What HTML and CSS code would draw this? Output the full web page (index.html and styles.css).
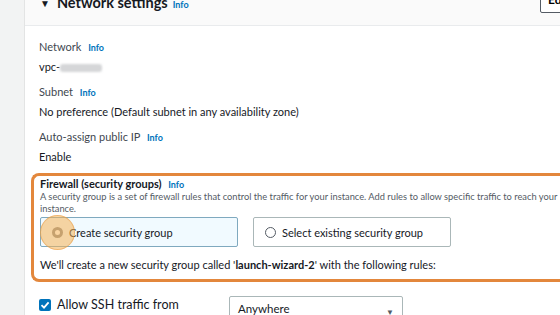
FILE: index.html
```html
<!DOCTYPE html>
<html lang="en">
<head>
  <meta charset="UTF-8" />
  <title>Network settings</title>
  <link rel="stylesheet" href="styles.css">
</head>
<body>
  <div class="side"></div>

  <div class="panel">
    <!-- Panel header -->
    <div class="panel-head">
      <span class="caret">&#9660;</span>
      <h2>Network settings</h2>
      <a class="info" href="#">Info</a>
      <button class="edit">Edit</button>
    </div>

    <div class="panel-body">
      <div class="field">
        <div class="label">Network <a class="info" href="#">Info</a></div>
        <div class="value">vpc-<span class="blur"></span></div>
      </div>
      <div class="field">
        <div class="label">Subnet <a class="info" href="#">Info</a></div>
        <div class="value">No preference (Default subnet in any availability zone)</div>
      </div>
      <div class="field">
        <div class="label">Auto-assign public IP <a class="info" href="#">Info</a></div>
        <div class="value">Enable</div>
      </div>

      <!-- Highlighted firewall block -->
      <div class="firewall">
        <div class="label strong">Firewall (security groups) <a class="info" href="#">Info</a></div>
        <p class="desc">A security group is a set of firewall rules that control the traffic for your instance. Add rules to allow specific traffic to reach your instance.</p>
        <div class="tiles">
          <label class="tile selected">
            <span class="radio"></span>
            <span class="click"></span>
            Create security group
          </label>
          <label class="tile">
            <span class="radio"></span>
            Select existing security group
          </label>
        </div>
        <p class="note">We'll create a new security group called '<b>launch-wizard-2</b>' with the following rules:</p>
      </div>

      <div class="rule">
        <div class="rule-left">
          <div class="check-row">
            <span class="checkbox">
              <svg viewBox="0 0 12 12" width="12" height="12"><path d="M2.5 6.2 L5 8.6 L9.6 3.4" fill="none" stroke="#fff" stroke-width="1.8"/></svg>
            </span>
            Allow SSH traffic from
          </div>
          <div class="hint">Helps you connect to your instance</div>
        </div>
        <div class="select">
          Anywhere
          <span class="arrow">&#9660;</span>
        </div>
      </div>
    </div>
  </div>
</body>
</html>
```

FILE: styles.css
```css
* {
  margin: 0;
  padding: 0;
  box-sizing: border-box;
}
body {
  font-family: Lato, 'Open Sans', sans-serif;
  color: #16191f;
  background: #f2f3f3;
  display: flex;
  height: 315px;
  overflow: hidden;
}
.side {
  width: 24px;
  flex-shrink: 0;
}
.panel {
  flex: 1;
  background: #fff;
  border-left: 1px solid #e3e4e4;
  margin-top: -14px;
}
.panel-head {
  display: flex;
  align-items: center;
  gap: 5px;
  height: 40px;
  padding: 0 0 6px 15px;
  background: #fafafa;
  border-bottom: 1px solid #e9ebed;
  position: relative;
}
.caret {
  font-size: 10px;
  color: #16191f;
  margin-right: 2px;
}
.panel-head h2 {
  font-size: 14.5px;
  font-weight: 700;
}
.info {
  font-size: 9px;
  font-weight: 700;
  color: #0073bb;
  text-decoration: none;
  margin-left: 4px;
}
.panel-head .info {
  margin: 3px 0 0 0;
}
.edit {
  position: absolute;
  right: -40px;
  top: 0;
  height: 27px;
  width: 60px;
  background: #fff;
  border: 1px solid #545b64;
  border-radius: 2px;
  font: 700 12px Lato, sans-serif;
  text-align: left;
  padding-left: 7px;
}
.panel-body {
  padding: 12px 0 0 14px;
}
.field {
  margin-bottom: 7px;
}
.label {
  font-size: 11px;
  color: #414750;
  line-height: 17px;
}
.label.strong {
  font-weight: 700;
  color: #16191f;
  line-height: 13px;
}
.value {
  font-size: 11px;
  line-height: 18px;
  margin-top: 2px;
}
.blur {
  display: inline-block;
  width: 42px;
  height: 8px;
  background: #d5d6d8;
  border-radius: 3px;
  vertical-align: middle;
  filter: blur(1px);
}
.firewall {
  margin: 5px -20px 0 -8px;
  padding: 1px 0 7px 6px;
  border: 3px solid #e3873c;
  border-right: none;
  border-radius: 8px 0 0 8px;
}
.desc {
  font-size: 9.3px;
  color: #545b64;
  line-height: 12px;
  padding-right: 16px;
}
.tiles {
  display: flex;
  gap: 15px;
  margin-top: 2px;
}
.tile {
  position: relative;
  display: flex;
  align-items: center;
  gap: 6px;
  width: 198px;
  height: 30px;
  padding-left: 11px;
  border: 1px solid #aab7b8;
  border-radius: 2px;
  font-size: 11px;
  background: #fff;
}
.tile.selected {
  background: #f1faff;
  border-color: #7fa9bf;
}
.radio {
  width: 11px;
  height: 11px;
  border: 1px solid #545b64;
  border-radius: 50%;
  background: #fff;
  flex-shrink: 0;
}
.tile.selected .radio {
  border: 3.5px solid #8c8c8c;
}
.click {
  position: absolute;
  left: -1px;
  top: -3px;
  width: 35px;
  height: 35px;
  border-radius: 50%;
  background: rgba(246, 178, 86, 0.55);
  border: 1px solid rgba(232, 150, 60, 0.5);
}
.note {
  font-size: 11px;
  line-height: 15px;
  margin-top: 10px;
}
.rule {
  display: flex;
  gap: 25px;
  margin-top: 14px;
}
.rule-left {
  width: 165px;
}
.check-row {
  display: flex;
  align-items: center;
  gap: 6px;
  font-size: 12.5px;
  line-height: 17px;
}
.checkbox {
  width: 12px;
  height: 12px;
  background: #0073bb;
  border-radius: 2px;
  display: flex;
}
.hint {
  font-size: 10px;
  color: #687078;
  margin-left: 18px;
}
.select {
  position: relative;
  width: 174px;
  height: 28px;
  border: 1px solid #aab7b8;
  border-radius: 2px;
  font-size: 11.5px;
  padding: 5px 0 0 8px;
}
.arrow {
  position: absolute;
  right: 8px;
  top: 10px;
  font-size: 8px;
  color: #545b64;
}
```
